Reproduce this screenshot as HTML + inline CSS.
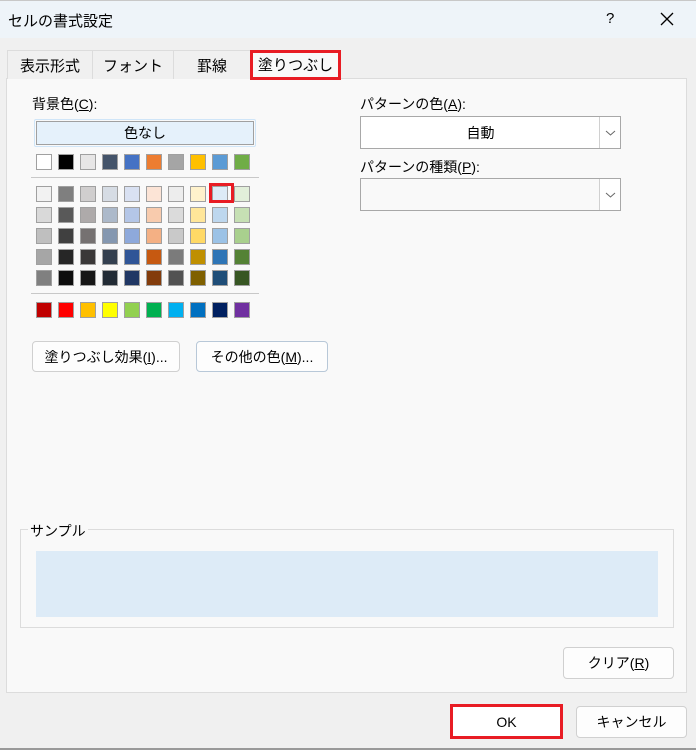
<!DOCTYPE html>
<html><head><meta charset="utf-8"><style>
*{margin:0;padding:0;box-sizing:border-box}
body{width:696px;height:750px;background:#f0f0f0;font-family:"Liberation Sans","Noto Sans CJK JP",sans-serif;font-size:14px;color:#000;position:relative;overflow:hidden}
.a{position:absolute}
.title{left:0;top:0;width:696px;height:38px;background:#eef4f9;border-top:1px solid #c8c8c8}
.tab{position:absolute;top:50px;height:29px;border:1px solid #dcdcdc;border-bottom:none;background:#f0f0f0;text-align:center;line-height:31px;font-size:15px}
.panel{left:6px;top:78px;width:681px;height:615px;background:#f9f9f9;border:1px solid #dcdcdc}
.sw{position:absolute;width:16px;height:16px;border:1px solid #a0a0a0}
.btn{position:absolute;background:#fdfdfd;border:1px solid #d0d0d0;border-radius:4px;text-align:center;font-size:14px}
.sel{position:absolute;background:#fff;border:1px solid #a8a8a8}
.sel .ar{position:absolute;right:0;top:0;width:21px;height:100%;border-left:1px solid #d0d0d0;background:#fff}
u{text-decoration:underline}
</style></head><body>
<div class="a title"></div>
<div class="a" style="left:8px;top:10px;font-size:15px">セルの書式設定</div>
<div class="a" style="left:606px;top:10px;font-size:15px">?</div>
<svg class="a" style="left:660px;top:12px" width="14" height="14"><path d="M1 1L13 13M13 1L1 13" stroke="#000" stroke-width="1.3"/></svg>

<div class="a panel"></div>
<div class="tab" style="left:7px;width:86px">表示形式</div>
<div class="tab" style="left:92px;width:82px">フォント</div>
<div class="tab" style="left:173px;width:78px">罫線</div>
<div class="tab" style="left:250px;width:91px;background:#f9f9f9;border:3px solid #e81c24;height:30px;line-height:26px">塗りつぶし</div>

<div class="a" style="left:32px;top:94px">背景色(<u>C</u>):</div>
<div class="a" style="left:34px;top:119px;width:222px;height:28px;border:1px solid #cfe5f8;border-radius:2px"></div>
<div class="a" style="left:36px;top:121px;width:218px;height:24px;background:#e5f1fb;border:1px solid #a0a0a0;text-align:center;line-height:23px">色なし</div>
<div class="a" style="left:31px;top:177px;width:228px;height:1px;background:#c8c8c8"></div>
<div class="a" style="left:31px;top:293px;width:228px;height:1px;background:#c8c8c8"></div>
<div id="g"></div>
<div class="a" style="left:209px;top:183px;width:25px;height:20px;border:3px solid #e81c24"></div>

<div class="btn" style="left:32px;top:341px;width:148px;height:31px;line-height:30px">塗りつぶし効果(<u>I</u>)...</div>
<div class="btn" style="left:196px;top:341px;width:132px;height:31px;line-height:30px;border-color:#b8c8d8">その他の色(<u>M</u>)...</div>

<div class="a" style="left:360px;top:94px">パターンの色(<u>A</u>):</div>
<div class="sel" style="left:360px;top:116px;width:261px;height:33px"><div style="position:absolute;left:0;width:239px;text-align:center;line-height:32px">自動</div><div class="ar"><svg width="21" height="31"><path d="M6 14L10.5 18L15 14" fill="none" stroke="#666"/></svg></div></div>
<div class="a" style="left:360px;top:157px">パターンの種類(<u>P</u>):</div>
<div class="sel" style="left:360px;top:178px;width:261px;height:33px;background:#f9f9f9"><div class="ar"><svg width="21" height="31"><path d="M6 14L10.5 18L15 14" fill="none" stroke="#666"/></svg></div></div>

<div class="a" style="left:20px;top:529px;width:654px;height:99px;border:1px solid #dcdcdc"></div>
<div class="a" style="left:28px;top:521px;background:#f9f9f9;padding:0 2px;font-size:14px">サンプル</div>
<div class="a" style="left:36px;top:551px;width:622px;height:66px;background:#ddebf7"></div>

<div class="btn" style="left:563px;top:647px;width:111px;height:32px;line-height:31px">クリア(<u>R</u>)</div>
<div class="a" style="left:450px;top:704px;width:113px;height:35px;background:#fff;border:3px solid #e81c24;text-align:center;line-height:30px">OK</div>
<div class="btn" style="left:576px;top:706px;width:111px;height:32px;line-height:31px">キャンセル</div>
<div class="a" style="left:0;top:748px;width:696px;height:2px;background:#999"></div>
<script>
var rows=[
[154,["#ffffff","#000000","#e7e6e6","#44546a","#4472c4","#ed7d31","#a5a5a5","#ffc000","#5b9bd5","#70ad47"]],
[186,["#f2f2f2","#7f7f7f","#d0cece","#d6dce4","#d9e1f2","#fce4d6","#ededed","#fff2cc","#ddebf7","#e2efda"]],
[207,["#d9d9d9","#595959","#aeaaaa","#acb9ca","#b4c6e7","#f8cbad","#dbdbdb","#ffe699","#bdd7ee","#c6e0b4"]],
[228,["#bfbfbf","#404040","#757171","#8497b0","#8ea9db","#f4b084","#c9c9c9","#ffd966","#9bc2e6","#a9d08e"]],
[249,["#a6a6a6","#262626","#3a3838","#333f4f","#2f5597","#c65911","#7b7b7b","#bf8f00","#2e75b6","#548235"]],
[270,["#808080","#0d0d0d","#161616","#222b35","#203764","#833c0c","#525252","#7f6000","#1f4e78","#375623"]],
[302,["#c00000","#ff0000","#ffc000","#ffff00","#92d050","#00b050","#00b0f0","#0070c0","#002060","#7030a0"]]];
var h="";rows.forEach(function(r){r[1].forEach(function(c,i){h+='<div class="sw" style="left:'+(36+22*i)+'px;top:'+r[0]+'px;background:'+c+'"></div>';});});
document.getElementById("g").innerHTML=h;
</script>
</body></html>
